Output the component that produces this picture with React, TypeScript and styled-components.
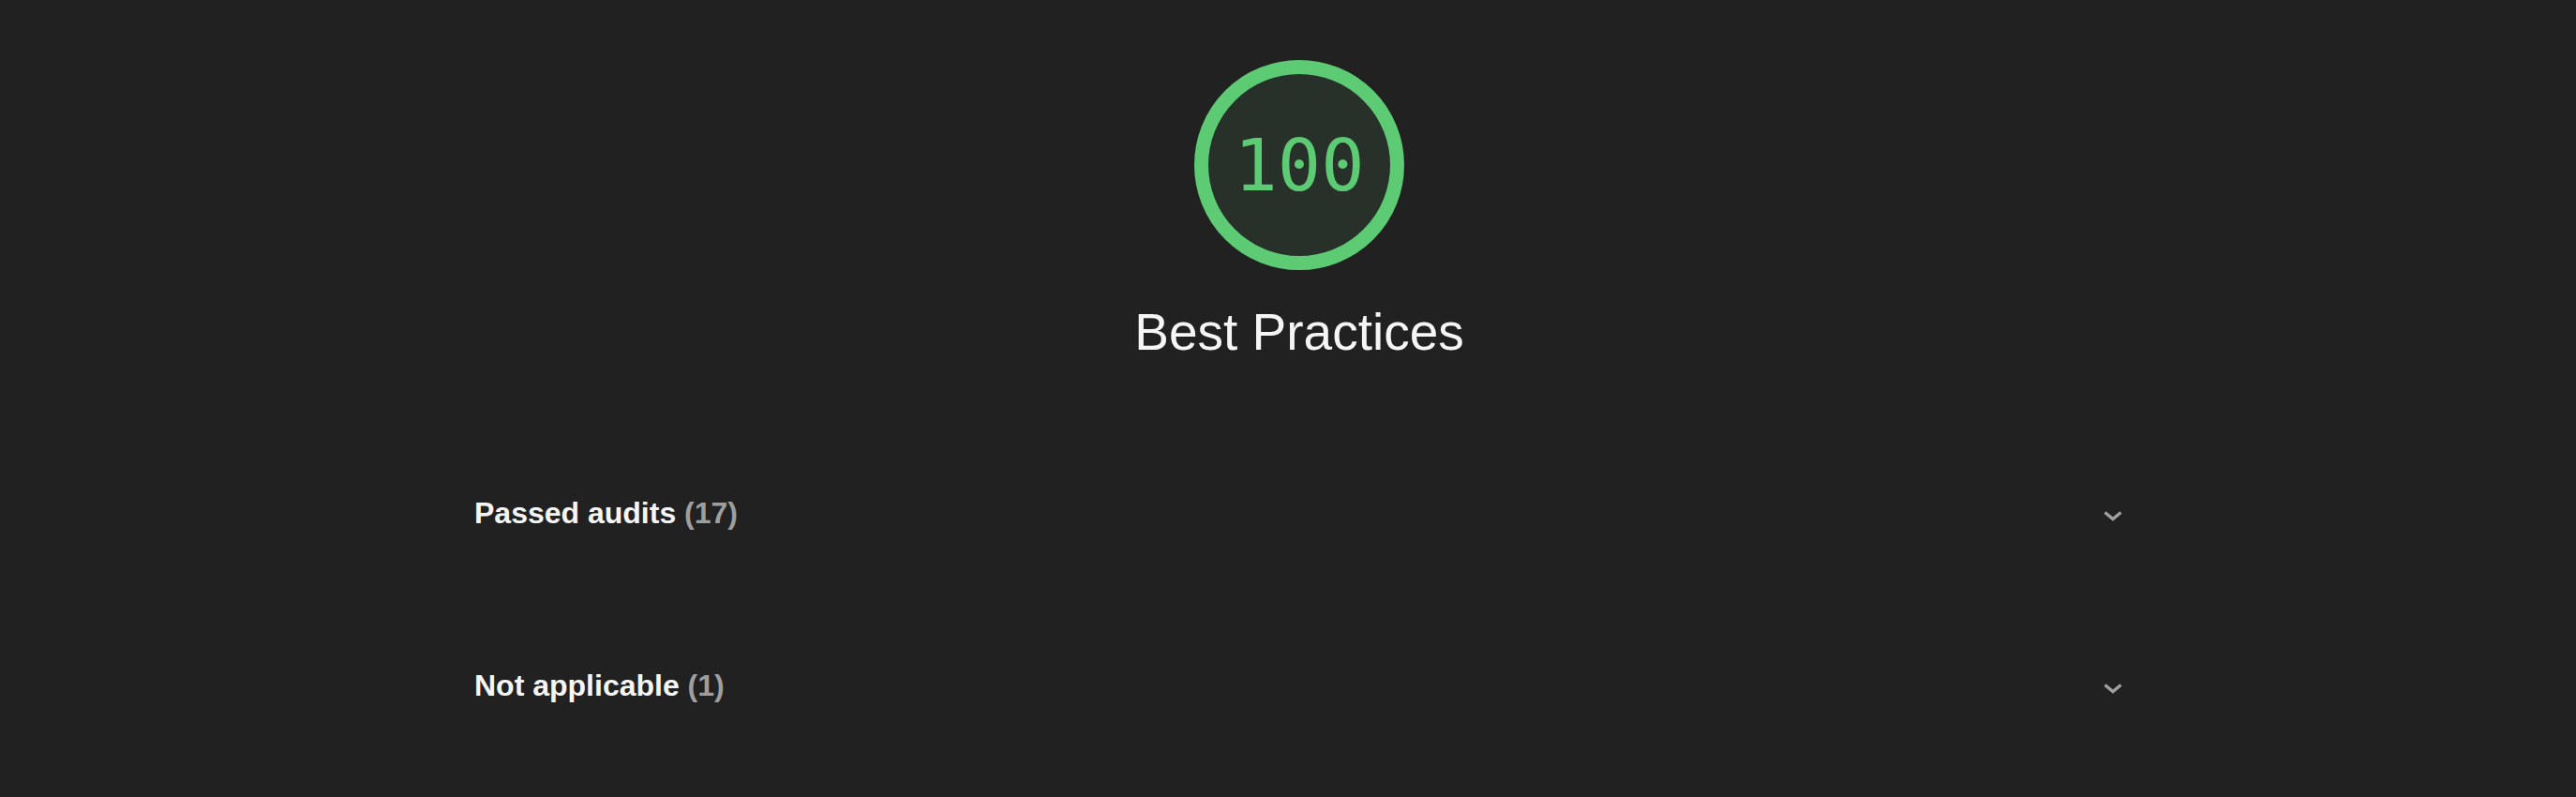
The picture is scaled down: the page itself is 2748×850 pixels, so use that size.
import styled, { createGlobalStyle } from "styled-components";

const GlobalStyle = createGlobalStyle`
  html, body {
    margin: 0;
    background: #212121;
  }
  body {
    font-family: "Liberation Sans", Arial, sans-serif;
    color: #f5f5f5;
  }
`;

const GAUGE_SIZE = 224;
const STROKE = 15;

function Gauge({ score }: { score: number }) {
  const r = (GAUGE_SIZE - STROKE) / 2;
  return (
    <GaugeWrapper>
      <svg width={GAUGE_SIZE} height={GAUGE_SIZE} viewBox={`0 0 ${GAUGE_SIZE} ${GAUGE_SIZE}`}>
        <circle
          cx={GAUGE_SIZE / 2}
          cy={GAUGE_SIZE / 2}
          r={r}
          fill="#28302a"
          stroke="#5ccb74"
          strokeWidth={STROKE}
        />
      </svg>
      <GaugeScore>{score}</GaugeScore>
    </GaugeWrapper>
  );
}

function Chevron() {
  return (
    <ChevronIcon width="24" height="24" viewBox="0 0 24 24">
      <path d="M3.5 7.5 L12 14.5 L20.5 7.5" fill="none" stroke="#a0a0a0" strokeWidth="3.4" />
    </ChevronIcon>
  );
}

const clumps = [
  { title: "Passed audits", count: 17 },
  { title: "Not applicable", count: 1 },
];

function App() {
  return (
    <Page>
      <GlobalStyle />
      <Column>
        <Header>
          <Gauge score={100} />
          <CategoryTitle>Best Practices</CategoryTitle>
        </Header>
        <Clumps>
          {clumps.map((clump) => {
            return (
              <ClumpRow key={clump.title}>
                <ClumpTitle>
                  {clump.title} <Count>({clump.count})</Count>
                </ClumpTitle>
                <Chevron />
              </ClumpRow>
            );
          })}
        </Clumps>
      </Column>
    </Page>
  );
}

export default App;

const Page = styled.div`
  height: 850px;
  padding-left: 24px;
  overflow: hidden;
`;

const Column = styled.div`
  max-width: 1760px;
  margin: 0 auto;
`;

const Header = styled.div`
  display: flex;
  flex-direction: column;
  align-items: center;
  padding-top: 64px;
`;

const GaugeWrapper = styled.div`
  position: relative;
  width: ${GAUGE_SIZE}px;
  height: ${GAUGE_SIZE}px;

  svg {
    display: block;
  }
`;

const GaugeScore = styled.div`
  position: absolute;
  inset: 0;
  display: flex;
  align-items: center;
  justify-content: center;
  font-family: "DejaVu Sans Mono", monospace;
  font-size: 77px;
  color: #5ccb74;
`;

const CategoryTitle = styled.h2`
  margin: 34px 0 0;
  font-size: 55px;
  font-weight: 400;
  line-height: normal;
  color: #f5f5f5;
`;

const Clumps = styled.div`
  margin-top: 69px;
  display: flex;
  flex-direction: column;
`;

const ClumpRow = styled.div`
  height: 184px;
  display: flex;
  align-items: center;
  justify-content: space-between;
`;

const ClumpTitle = styled.span`
  font-size: 32px;
  font-weight: 700;
  color: #f5f5f5;
`;

const Count = styled.span`
  color: #9e9e9e;
`;

const ChevronIcon = styled.svg`
  display: block;
  margin-top: 8px;
`;
